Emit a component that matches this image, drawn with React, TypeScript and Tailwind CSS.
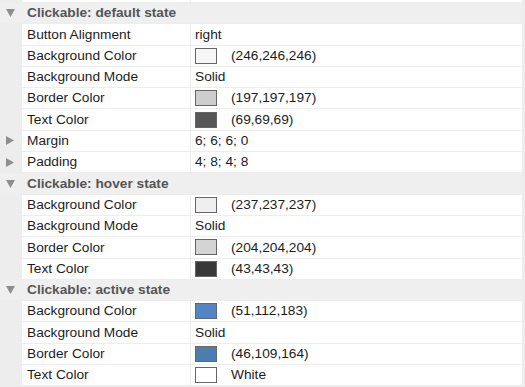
import React from "react";

type Row =
  | { kind: "header"; title: string }
  | { kind: "row"; label: string; value: string; swatch?: string; collapsed?: boolean };

const rows: Row[] = [
  { kind: "header", title: "Clickable: default state" },
  { kind: "row", label: "Button Alignment", value: "right" },
  { kind: "row", label: "Background Color", value: "(246,246,246)", swatch: "#f6f6f6" },
  { kind: "row", label: "Background Mode", value: "Solid" },
  { kind: "row", label: "Border Color", value: "(197,197,197)", swatch: "#cdcdcd" },
  { kind: "row", label: "Text Color", value: "(69,69,69)", swatch: "#575757" },
  { kind: "row", label: "Margin", value: "6; 6; 6; 0", collapsed: true },
  { kind: "row", label: "Padding", value: "4; 8; 4; 8", collapsed: true },
  { kind: "header", title: "Clickable: hover state" },
  { kind: "row", label: "Background Color", value: "(237,237,237)", swatch: "#efefef" },
  { kind: "row", label: "Background Mode", value: "Solid" },
  { kind: "row", label: "Border Color", value: "(204,204,204)", swatch: "#d4d4d4" },
  { kind: "row", label: "Text Color", value: "(43,43,43)", swatch: "#393939" },
  { kind: "header", title: "Clickable: active state" },
  { kind: "row", label: "Background Color", value: "(51,112,183)", swatch: "#5385c4" },
  { kind: "row", label: "Background Mode", value: "Solid" },
  { kind: "row", label: "Border Color", value: "(46,109,164)", swatch: "#4b7eaf" },
  { kind: "row", label: "Text Color", value: "White", swatch: "#ffffff" },
];

function Down() {
  return (
    <svg width="9" height="8" viewBox="0 0 9 8">
      <polygon points="0,0 9,0 4.5,8" fill="#8e8e8e" />
    </svg>
  );
}

function Right() {
  return (
    <svg width="8" height="9" viewBox="0 0 8 9">
      <polygon points="0,0 8,4.5 0,9" fill="#8e8e8e" />
    </svg>
  );
}

export default function App() {
  return (
    <div
      className="w-[525px] h-[387px] overflow-hidden bg-[#ededed] pr-[3px] flex flex-col gap-px text-[13.7px] text-[#1c1c1c]"
      style={{ fontFamily: '"Liberation Sans", Arial, sans-serif' }}
    >
      <div className="flex h-[2px] shrink-0">
        <div className="w-[22px]" />
        <div className="flex-1 flex gap-px">
          <div className="w-[168px] bg-white" />
          <div className="flex-1 bg-white" />
        </div>
      </div>
      {rows.map((r, i) =>
        r.kind === "header" ? (
          <div key={i} className="flex h-[20.3px] shrink-0 items-center bg-[#efefef]">
            <div className="w-[22px] flex items-center justify-center pr-[1px]">
              <Down />
            </div>
            <div className="pl-[5px] font-bold text-[#555555] leading-none">{r.title}</div>
          </div>
        ) : (
          <div key={i} className="flex h-[20.3px] shrink-0">
            <div className="w-[22px] flex items-center justify-center pr-[2px]">
              {r.collapsed ? <Right /> : null}
            </div>
            <div className="flex-1 flex gap-px">
              <div className="w-[168px] bg-white flex items-center pl-[5px] leading-none">{r.label}</div>
              <div className="flex-1 bg-white flex items-center pl-[4px] leading-none">
                {r.swatch ? (
                  <>
                    <span
                      className="w-[22px] h-[16px] border border-[#666666] mr-[14px] shrink-0"
                      style={{ backgroundColor: r.swatch }}
                    />
                    <span>{r.value}</span>
                  </>
                ) : (
                  <span>{r.value}</span>
                )}
              </div>
            </div>
          </div>
        )
      )}
    </div>
  );
}
